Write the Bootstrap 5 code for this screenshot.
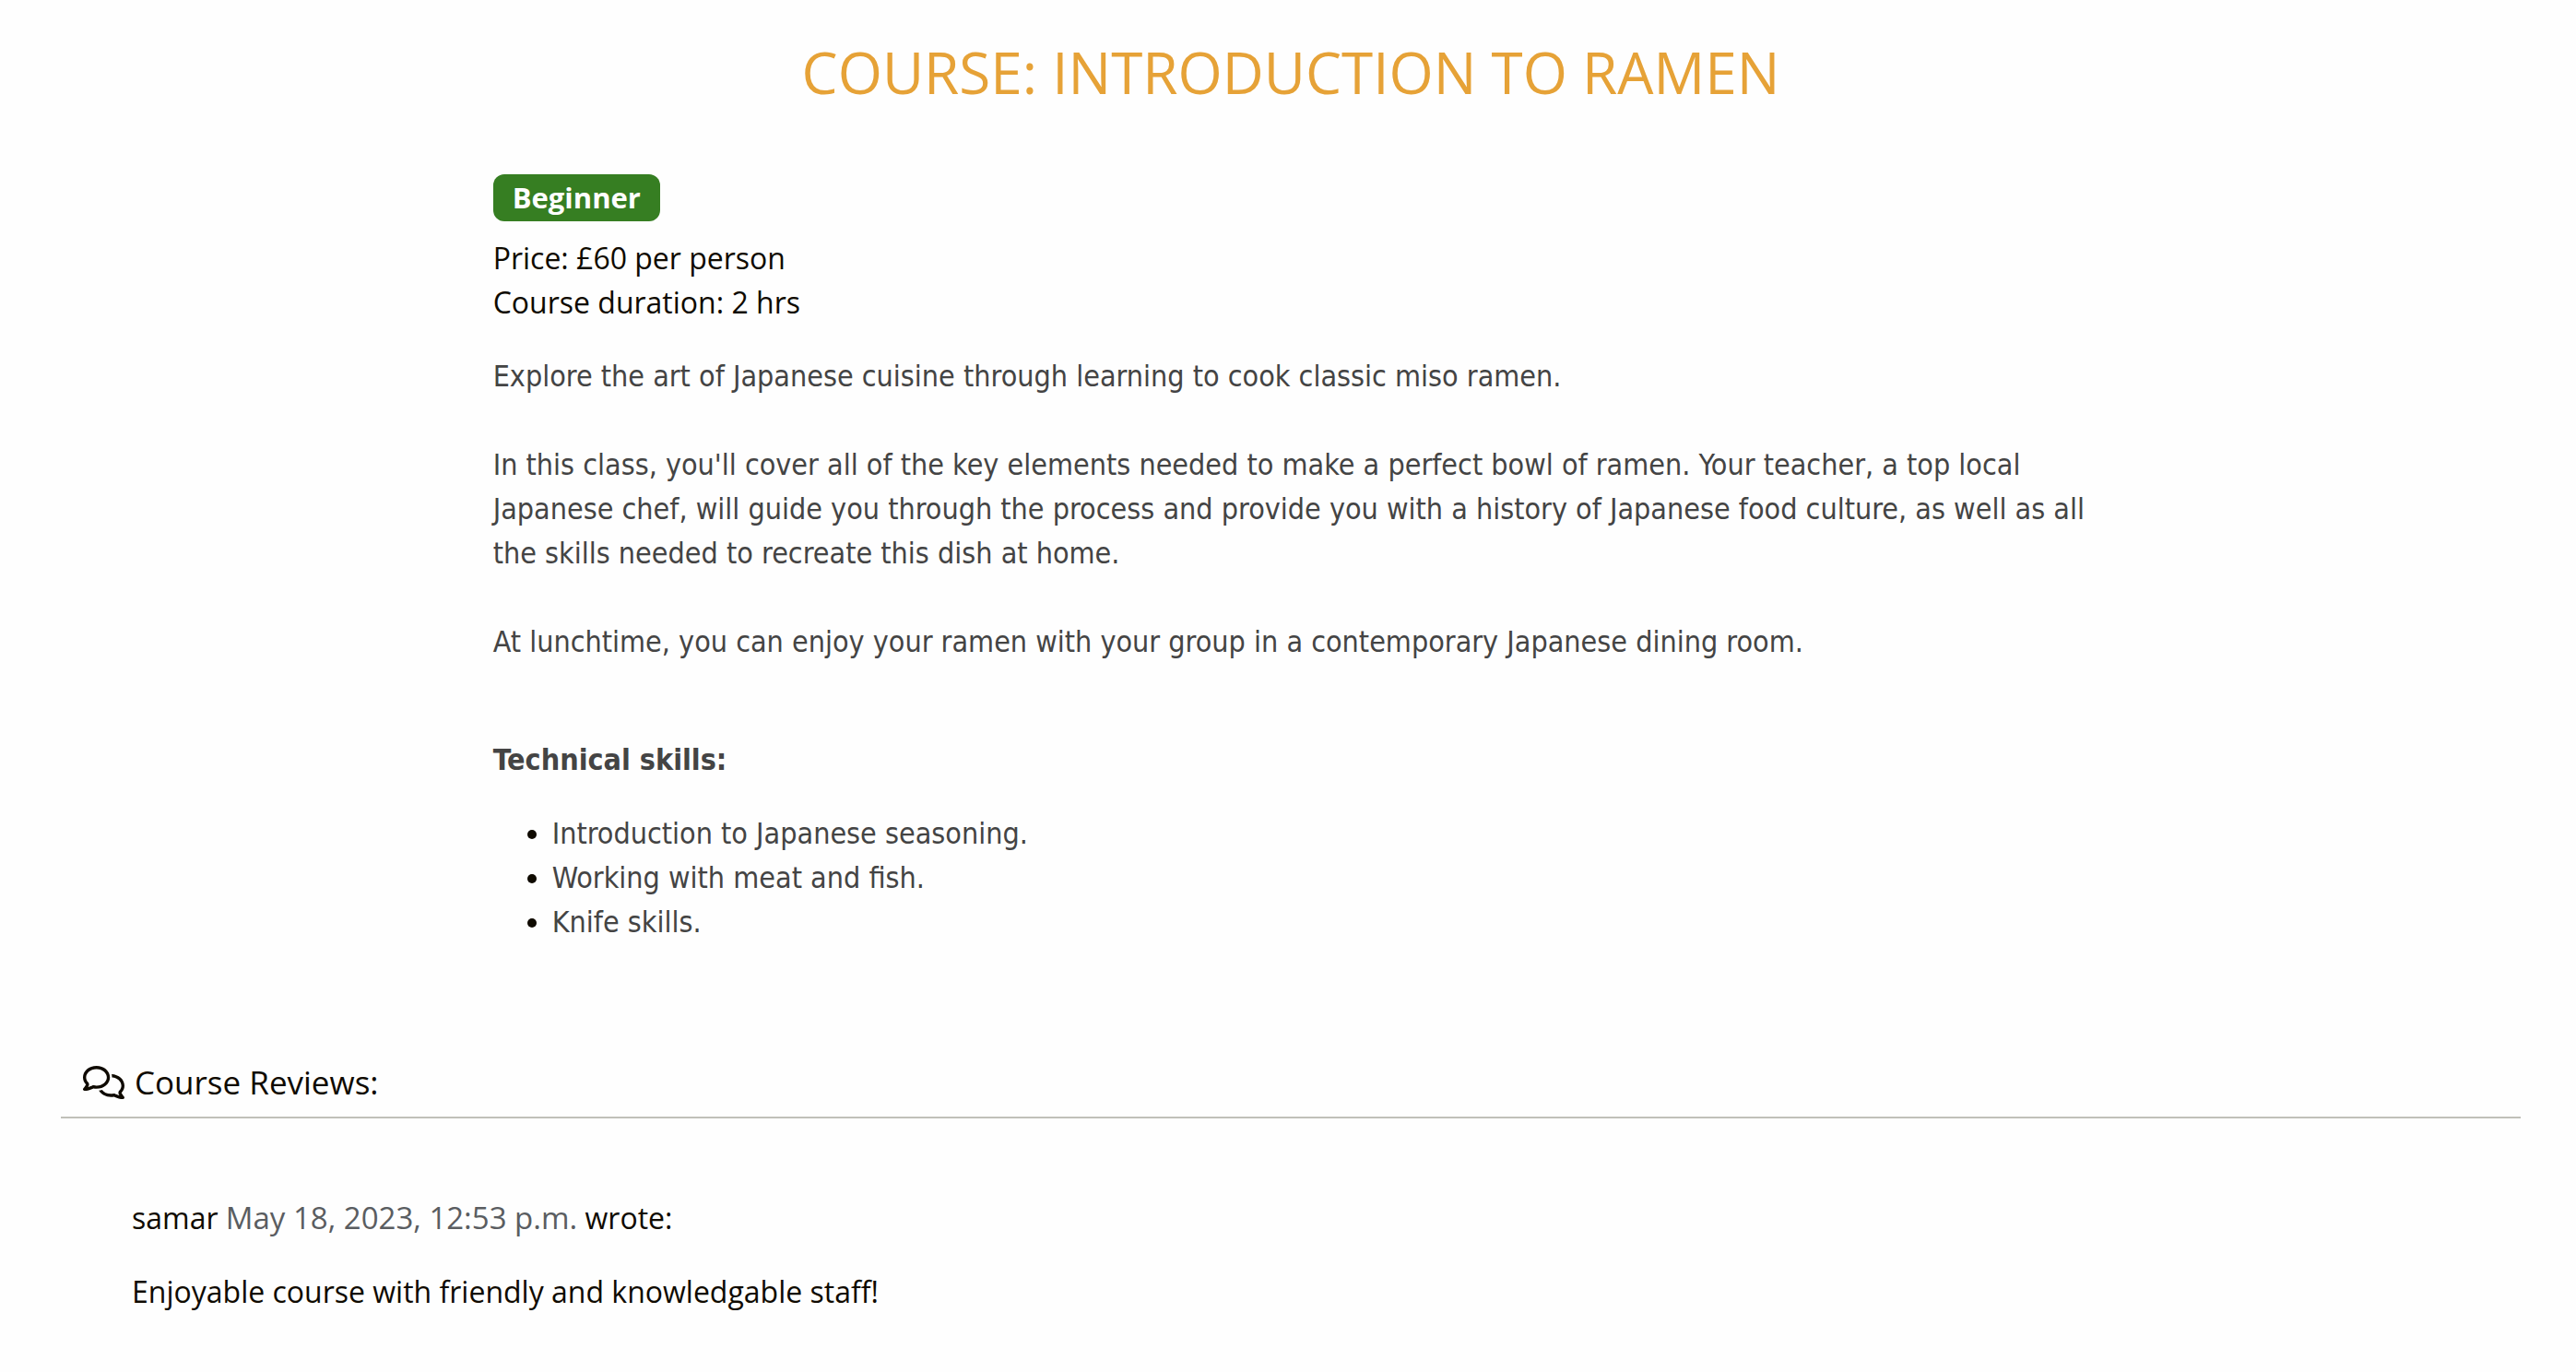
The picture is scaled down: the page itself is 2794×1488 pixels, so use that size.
<!DOCTYPE html>
<html lang="en">
<head>
<meta charset="utf-8">
<meta name="viewport" content="width=device-width, initial-scale=1">
<title>Course: Introduction to Ramen</title>
<link href="https://cdn.jsdelivr.net/npm/bootstrap@5.3.0/dist/css/bootstrap.min.css" rel="stylesheet">
<style>
  body {
    background: #fefefe;
    color: #0f0a00;
    font: 400 32px/48px "Open Sans", sans-serif;
  }
  .course-page { padding: 40px 60px 27px 66px; }
  .course-title {
    margin-bottom: 73px;
    color: #e6a237;
    font-size: 62px;
    font-weight: 500;
    line-height: 76px;
  }
  .course-row { --bs-gutter-x: 48px; margin: 0; }
  .level-badge {
    display: block;
    width: fit-content;
    margin-bottom: 16px;
    padding: 10px 21px;
    border-radius: 12px;
    background: #367e22;
    font-size: 31px;
    line-height: 31px;
  }
  .course-copy { color: #444; font-family: "DejaVu Sans Condensed", "DejaVu Sans", sans-serif; }
  .course-copy p { margin-bottom: 48px; }
  .course-copy .skills-label { margin: 80px 0 32px; }
  .skill-list { margin: 0 0 128px; padding-left: 64px; }
  .skill-list li::marker { color: #0f0a00; }
  .reviews-title {
    gap: 11px;
    margin: 0;
    padding: 0 24px 16px;
    border-bottom: 2px solid #c0c0b9;
    font-size: 35px;
    font-weight: 400;
    line-height: 43px;
  }
  .review-item { padding: 84px 77px 0; }
  .review-item p { margin-bottom: 32px; }
  .review-item time { color: #5a5d61; font-size: 33px; }
</style>
</head>
<body>
<main class="course-page">
  <h1 class="course-title text-center text-uppercase">Course: Introduction to Ramen</h1>
  <div class="row course-row">
    <div class="col-8 offset-2">
      <span class="badge level-badge">Beginner</span>
      <p class="m-0">Price: £60 per person<br>Course duration: 2 hrs</p>
      <div class="course-copy pt-4 mt-2">
        <p>Explore the art of Japanese cuisine through learning to cook classic miso ramen.</p>
        <p>In this class, you'll cover all of the key elements needed to make a perfect bowl of ramen. Your teacher, a top local Japanese chef, will guide you through the process and provide you with a history of Japanese food culture, as well as all the skills needed to recreate this dish at home.</p>
        <p>At lunchtime, you can enjoy your ramen with your group in a contemporary Japanese dining room.</p>
        <p class="skills-label fw-bold">Technical skills:</p>
        <ul class="skill-list">
          <li>Introduction to Japanese seasoning.</li>
          <li>Working with meat and fish.</li>
          <li>Knife skills.</li>
        </ul>
      </div>
    </div>
  </div>
  <section>
    <h2 class="reviews-title d-flex align-items-center">
      <svg width="45" height="36" viewBox="0 0 640 512" fill="currentColor" aria-hidden="true"><path d="M88.2 309.1c9.8-18.3 6.8-40.8-7.5-55.8C59.4 230.9 48 204 48 176c0-63.5 63.8-128 160-128s160 64.5 160 128s-63.8 128-160 128c-13.1 0-25.8-1.3-37.8-3.6c-10.4-2-21.2-.6-30.7 4.2c-4.1 2.1-8.3 4.1-12.6 6c-16 7.2-32.9 13.5-49.9 18c2.8-4.6 5.4-9.1 7.9-13.6c1.1-1.9 2.2-3.9 3.2-5.9zM0 176c0 41.8 17.2 80.1 45.9 110.3c-.9 1.7-1.9 3.5-2.8 5.1c-10.3 18.4-22.3 36.5-36.6 52.1c-6.6 7-8.3 17.2-4.6 25.9C5.8 378.3 14.4 384 24 384c43 0 86.5-13.3 122.7-29.7c4.8-2.2 9.6-4.5 14.2-6.8c15.1 3 30.9 4.5 47.1 4.5c114.9 0 208-78.8 208-176S322.9 0 208 0S0 78.8 0 176zM432 480c16.2 0 31.9-1.6 47.1-4.5c4.6 2.3 9.4 4.6 14.2 6.8C529.5 498.7 573 512 616 512c9.6 0 18.2-5.7 22-14.5c3.8-8.8 2-19-4.6-25.9c-14.2-15.6-26.2-33.7-36.6-52.1c-.9-1.7-1.9-3.4-2.8-5.1C622.8 384.1 640 345.8 640 304c0-94.4-87.9-171.5-198.2-175.8c4.1 15.2 6.2 31.2 6.2 47.8l0 .6c87.2 6.7 144 67.5 144 127.4c0 28-11.4 54.9-32.7 77.2c-14.3 15-17.3 37.6-7.5 55.8c1.1 2 2.2 4 3.2 5.9c2.5 4.5 5.2 9 7.9 13.6c-17-4.5-33.9-10.7-49.9-18c-4.3-1.9-8.5-3.9-12.6-6c-9.5-4.8-20.3-6.2-30.7-4.2c-12.1 2.4-24.8 3.6-37.8 3.6c-61.7 0-110-26.5-136.8-62.3c-16 5.4-32.8 9.4-50 11.8C279 439.8 350 480 432 480z"/></svg>
      Course Reviews:
    </h2>
    <article class="review-item">
      <p>samar <time datetime="2023-05-18T12:53">May 18, 2023, 12:53 p.m.</time> wrote:</p>
      <p class="m-0">Enjoyable course with friendly and knowledgable staff!</p>
    </article>
  </section>
</main>
<script src="https://cdn.jsdelivr.net/npm/bootstrap@5.3.0/dist/js/bootstrap.bundle.min.js"></script>
</body>
</html>
